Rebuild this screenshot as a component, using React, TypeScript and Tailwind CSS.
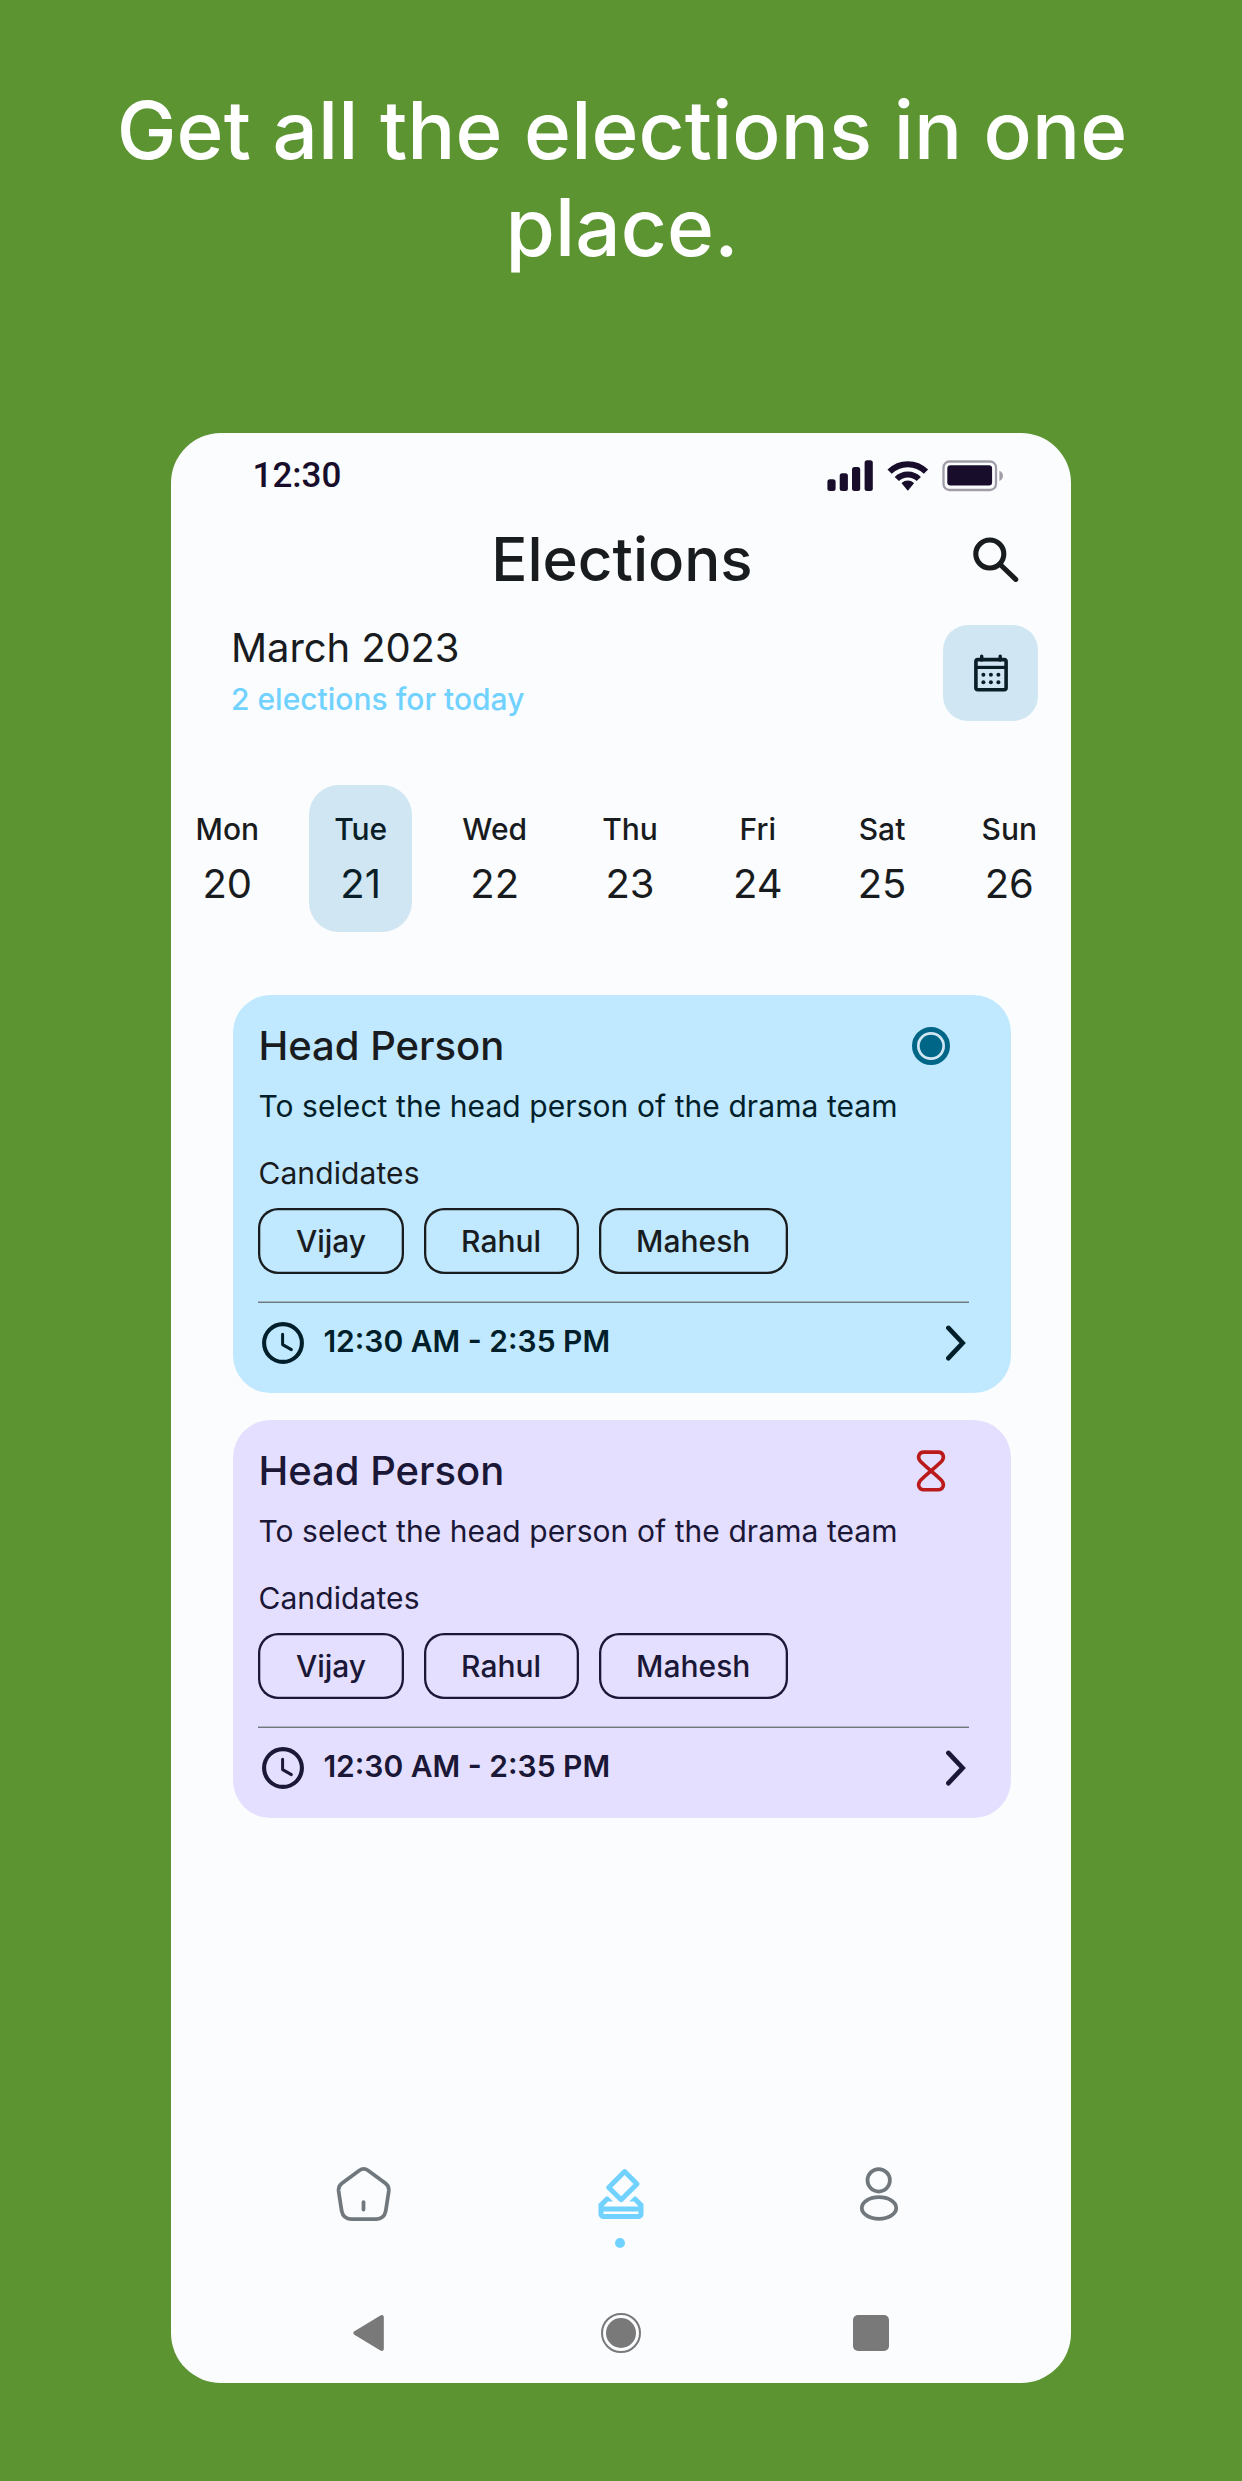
import type { ReactNode } from "react";

const days = [
  { name: "Mon", date: "20" },
  { name: "Tue", date: "21", selected: true },
  { name: "Wed", date: "22" },
  { name: "Thu", date: "23" },
  { name: "Fri", date: "24" },
  { name: "Sat", date: "25" },
  { name: "Sun", date: "26" },
];

const candidates = ["Vijay", "Rahul", "Mahesh"];

function SignalIcon() {
  return (
    <svg className="h-[32px] w-[46px]" viewBox="0 0 46 32" fill="currentColor">
      <rect x="0.4" y="19.3" width="8.2" height="11.8" rx="2.5" />
      <rect x="12.7" y="13.3" width="8.2" height="17.8" rx="2.5" />
      <rect x="25" y="7" width="8.2" height="24.1" rx="2.5" />
      <rect x="37.6" y="0.3" width="8.2" height="30.8" rx="2.5" />
    </svg>
  );
}

function WifiIcon() {
  return (
    <svg className="h-[32px] w-[42px]" viewBox="0 0 42 32" fill="none" stroke="currentColor">
      <path d="M2.6 11.7A25.7 25.7 0 0 1 39 11.7" strokeWidth="6" />
      <path d="M9.8 19A15.4 15.4 0 0 1 31.8 19" strokeWidth="6" />
      <path
        d="M15.3 23.2C18.4 20.5 23.2 20.5 26.3 23.2L20.8 29.8Z"
        fill="currentColor"
        strokeWidth="1.2"
        strokeLinejoin="round"
      />
    </svg>
  );
}

function BatteryIcon() {
  return (
    <svg className="h-[32px] w-[62px]" viewBox="0 0 62 32" fill="currentColor">
      <rect x="1.5" y="1.5" width="52.5" height="28.5" rx="6" fill="none" stroke="currentColor" strokeWidth="2.3" opacity="0.4" />
      <rect x="5.3" y="5.3" width="44.8" height="20.2" rx="3.2" />
      <path d="M57.4 10.7C60 11.8 61 13.7 61 15.8S60 19.8 57.4 20.9Z" opacity="0.4" />
    </svg>
  );
}

function SearchIcon() {
  return (
    <svg className="h-[46px] w-[46px]" viewBox="0 0 46 46" fill="none" stroke="currentColor" strokeWidth="5.1" strokeLinecap="round">
      <circle cx="16.8" cy="18" r="14" />
      <path d="M27.2 28.5L42.7 43.4" />
    </svg>
  );
}

function CalendarIcon() {
  return (
    <svg className="h-[38px] w-[34px]" viewBox="0 0 34 38" fill="none" stroke="currentColor" strokeWidth="3.6">
      <rect x="1.9" y="5.6" width="30.2" height="30.2" rx="2" />
      <path d="M1.9 13.4H32.1" strokeWidth="3.2" />
      <path d="M7.7 6V2.1M26.2 6V2.1" strokeLinecap="round" strokeWidth="3.4" />
      <g fill="currentColor" stroke="none">
        <circle cx="9.4" cy="20.8" r="2" />
        <circle cx="16.9" cy="20.8" r="2" />
        <circle cx="24.4" cy="20.8" r="2" />
        <circle cx="9.4" cy="28.3" r="2" />
        <circle cx="16.9" cy="28.3" r="2" />
        <circle cx="24.4" cy="28.3" r="2" />
      </g>
    </svg>
  );
}

function RadioIcon() {
  return (
    <svg className="h-[40px] w-[40px] text-[#006687]" viewBox="0 0 40 40" fill="none">
      <circle cx="20" cy="20" r="16.5" fill="#d0e6f3" stroke="currentColor" strokeWidth="5" />
      <circle cx="20" cy="20" r="11.3" fill="currentColor" />
    </svg>
  );
}

function HourglassIcon() {
  return (
    <svg className="h-[42px] w-[40px] text-[#ba1a1a]" viewBox="0 0 40 42" fill="none" stroke="currentColor" strokeWidth="3.6" strokeLinejoin="round">
      <path d="M12.6 2.1H27.4C31.8 2.1 33.9 6.8 31.1 10.6C28.4 14 23.4 17.6 20 20.9C16.6 24.2 11.6 27.8 8.9 31.2C6.1 35 8.2 39.7 12.6 39.7H27.4C31.8 39.7 33.9 35 31.1 31.2C28.4 27.8 23.4 24.2 20 20.9C16.6 17.6 11.6 14 8.9 10.6C6.1 6.8 8.2 2.1 12.6 2.1Z" />
    </svg>
  );
}

function ClockIcon() {
  return (
    <svg className="h-[42px] w-[42px]" viewBox="0 0 42 42" fill="none" stroke="currentColor">
      <circle cx="21" cy="21" r="18.9" strokeWidth="4.1" />
      <path d="M20.6 12.3V22.6L29.4 27.6" strokeWidth="3" strokeLinecap="round" strokeLinejoin="round" />
    </svg>
  );
}

function ChevronIcon() {
  return (
    <svg className="h-[36px] w-[20px]" viewBox="0 0 20 36" fill="none" stroke="currentColor" strokeWidth="4.7" strokeLinecap="round">
      <path d="M2.4 2.9L16.6 18L2.4 33.2" />
    </svg>
  );
}

function ElectionCard({ className, descClass, statusIcon }: { className: string; descClass: string; statusIcon: ReactNode }) {
  return (
    <article className={`flex h-[398px] w-[777.6px] flex-col rounded-[37.5px] pl-[25px] pr-[42px] pt-[26px] ${className}`}>
      <div className="flex h-[49px] items-center justify-between pr-[18px]">
        <h3 className="text-[40px] font-medium leading-[49px]">Head Person</h3>
        {statusIcon}
      </div>
      <p className={`mt-[18px] text-[30px] leading-[36px] tracking-[0.07px] ${descClass}`}>To select the head person of the drama team</p>
      <p className="mt-[31px] text-[30px] leading-[36px] tracking-[0.1px]">Candidates</p>
      <div className="mt-[17px] flex gap-[20px]">
        {candidates.map((name) => (
          <span
            key={name}
            className="h-[66px] rounded-[20px] px-[37.5px] text-[30px] font-medium leading-[66px] shadow-[inset_0_0_0_2.3px_currentColor]"
          >
            {name}
          </span>
        ))}
      </div>
      <div className="mt-[27px] h-[2px] bg-linear-to-b from-[#70787d]/45 from-50% to-[#70787d] to-50%" />
      <div className={`mt-[19px] flex h-[42px] items-center justify-between pl-[4px] pr-[3px] ${descClass}`}>
        <div className="flex items-center gap-[19px]">
          <ClockIcon />
          <span className="-mt-[4px] text-[30px] font-semibold leading-[36px]">12:30 AM - 2:35 PM</span>
        </div>
        <ChevronIcon />
      </div>
    </article>
  );
}

export default function App() {
  return (
    <main className="flex h-[2481px] w-[1242px] flex-col items-center overflow-hidden bg-[#5c9432] font-['Inter',sans-serif] text-[#191c1e]">
      <h1 className="mt-[81px] w-[1060px] pl-[2px] text-center text-[80px] font-medium leading-[97px] tracking-[0.1px] text-white">
        Get all the elections in one place.
      </h1>

      <section className="mt-[158px] flex h-[1950px] w-[900px] flex-col rounded-[50px] bg-[#fbfcfe]">
        <div className="mt-[22px] flex h-[41px] items-center justify-between pl-[81.5px] pr-[67px] text-[#180e2b]">
          <span className="font-['Roboto',sans-serif] text-[35px] font-medium leading-[41px]">12:30</span>
          <div className="flex items-center">
            <SignalIcon />
            <div className="ml-[14px]">
              <WifiIcon />
            </div>
            <div className="ml-[13px]">
              <BatteryIcon />
            </div>
          </div>
        </div>

        <header className="mt-[27px] grid h-[72px] grid-cols-[1fr_auto_1fr] items-center">
          <h2 className="col-start-2 pl-[2px] text-[60px] font-medium leading-[72px]">Elections</h2>
          <button className="mr-[52px] justify-self-end" aria-label="Search">
            <SearchIcon />
          </button>
        </header>

        <div className="mt-[28px] flex justify-between pl-[60px] pr-[33px]">
          <div>
            <p className="text-[40px] leading-[49px] tracking-[-0.1px]">March 2023</p>
            <p className="mt-[9px] text-[30px] font-medium leading-[36px] text-[#71d2ff]">2 elections for today</p>
          </div>
          <button
            className="mt-[2px] flex h-[95.5px] w-[95px] items-center justify-center rounded-[25px] bg-[#d0e6f3] text-[#0a1e28]"
            aria-label="Open calendar"
          >
            <CalendarIcon />
          </button>
        </div>

        <div className="mt-[64.5px] flex justify-between pl-[24.5px] pr-[34px] text-center">
          {days.map((day) => (
            <div
              key={day.name}
              className={
                day.selected
                  ? "-mx-[25px] h-[147px] rounded-[30px] bg-[#d0e6f3] px-[25px] pt-[26px] text-[#0a1e28]"
                  : "h-[147px] pt-[26px]"
              }
            >
              <p className="text-[30px] font-medium leading-[36px]">{day.name}</p>
              <p className="mt-[12px] text-[40px] leading-[49px]">{day.date}</p>
            </div>
          ))}
        </div>

        <div className="mt-[63px] flex flex-col gap-[27px] pl-[62.4px]">
          <ElectionCard className="bg-[#c0e8ff] text-[#191c1e]" descClass="text-[#001f2a]" statusIcon={<RadioIcon />} />
          <ElectionCard className="bg-[#e4dfff] text-[#1b1736]" descClass="text-[#1b1736]" statusIcon={<HourglassIcon />} />
        </div>

        <nav className="mt-[346px] flex h-[84px] items-start justify-between px-[163px] text-[#70787d]">
          <svg className="mt-[2px] h-[56px] w-[60px]" viewBox="0 0 60 56" fill="none" stroke="currentColor" strokeWidth="3.75">
            <path d="M25.3 4.5Q29.7 1.4 34.1 4.5L51.4 17.3Q55.3 20.2 54.8 25L51.7 45.2Q50 53 42.5 53H17Q9.5 53 7.7 45.2L4.6 25Q4.1 20.2 8 17.3Z" strokeLinejoin="round" />
            <path d="M29.5 36.2V43.5" strokeLinecap="round" />
          </svg>
          <div className="flex w-[60px] flex-col items-center text-[#71d2ff]">
            <svg className="h-[60px] w-[60px]" viewBox="0 0 24 24" fill="currentColor">
              <path d="M18 13h-.68l-2 2h1.91L19 17H5l1.78-2h2.05l-2-2H6l-3 3v4c0 1.1.89 2 1.99 2H19c1.1 0 2-.89 2-2v-4l-3-3zm1 7H5v-1h14v1zm-7.66-4.98c.39.39 1.02.39 1.41 0l6.36-6.36c.39-.39.39-1.02 0-1.41L14.16 2.3c-.38-.4-1.01-.4-1.4-.01L6.39 8.66c-.39.39-.39 1.02 0 1.41l4.95 4.95zm2.12-10.61L17 7.95l-4.95 4.95-3.54-3.54 4.95-4.95z" />
            </svg>
            <span className="mr-[2px] mt-[14px] h-[10px] w-[10px] rounded-full bg-[#71d2ff]" />
          </div>
          <svg className="mt-[2px] h-[56px] w-[60px]" viewBox="0 0 60 56" fill="none" stroke="currentColor" strokeWidth="3.75">
            <circle cx="30.7" cy="14.3" r="11.2" />
            <ellipse cx="31" cy="42" rx="17.2" ry="10.8" />
          </svg>
        </nav>

        <div className="mt-[65px] flex h-[40px] items-center justify-between px-[182px] text-[#797979]">
          <svg className="h-[40px] w-[31px]" viewBox="0 0 31 40" fill="currentColor">
            <path d="M1.4 18.2Q-0.6 20 1.4 21.8L27.4 37.6Q30.6 38.8 30.8 36V4Q30.6 1.2 27.4 2.4Z" />
          </svg>
          <svg className="ml-[5px] h-[40px] w-[40px]" viewBox="0 0 40 40" fill="currentColor">
            <circle cx="20" cy="20" r="19" fill="none" stroke="currentColor" strokeWidth="2" />
            <circle cx="20" cy="20" r="15" />
          </svg>
          <span className="h-[36px] w-[36px] rounded-[5px] bg-[#797979]" />
        </div>
      </section>
    </main>
  );
}
